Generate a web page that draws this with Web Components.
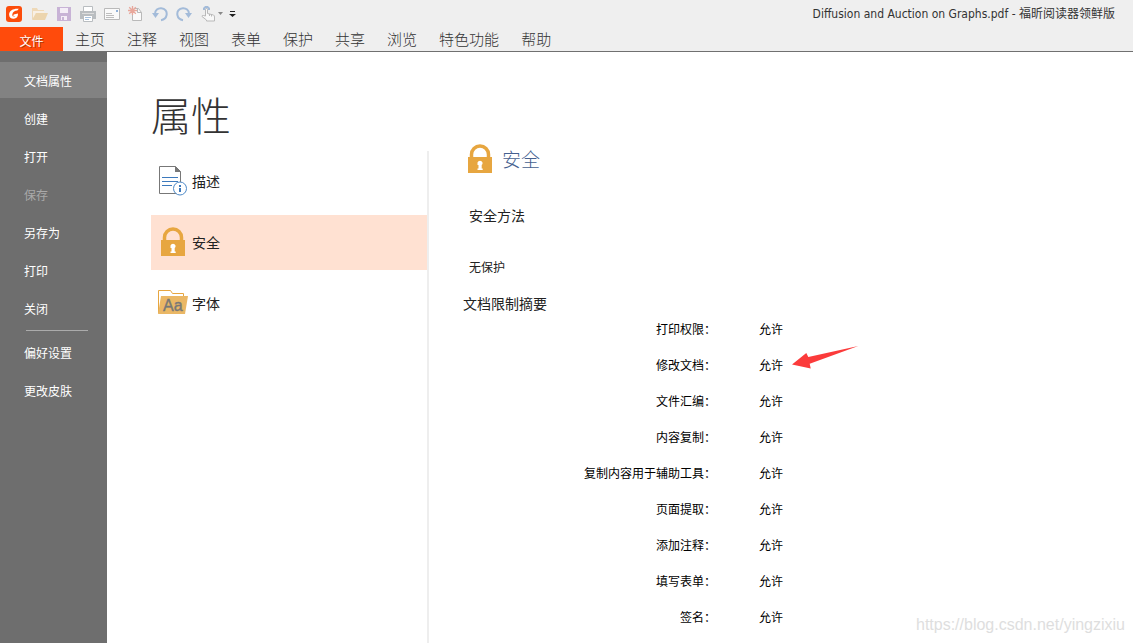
<!DOCTYPE html>
<html lang="zh-CN">
<head>
<meta charset="utf-8">
<title>Diffusion and Auction on Graphs.pdf - 福昕阅读器领鲜版</title>
<style>
html, body { margin: 0; }
body { background: #fff; color: #222; font: 12px/18px "Liberation Sans", "Noto Sans CJK SC", sans-serif; }
</style>
</head>
<body>
<reader-app></reader-app>
<script>
const define = (name, html, setup) => customElements.define(name, class extends HTMLElement {
  connectedCallback() {
    if (this.shadowRoot) return;
    const root = this.attachShadow({ mode: 'open' });
    root.innerHTML = html;
    if (setup) setup.call(this, root);
  }
});

const icons = {
  logo: [16, 16, '<rect width="16" height="16" rx="3" fill="#fc4c0a"/><path d="M12.8 2.8C8 2.2 3.2 4.4 3.1 8.4c0 3.4 2.9 5 5.600 4.200 2.200-.6 3.500-2.500 3.300-5.200L7.700 8.600l-.5 1.600 2-.3c-.5 1-3.100 1.100-2.900-1.500.2-2.600 3-3.900 5-3.800z" fill="#fff"/>'],
  open: [16, 16, '<path d="M0 2h5l1 2h6v3H4L1 13H0z" fill="#eed9b8"/><path d="M3.500 5h9v2H4L1 13V5z" fill="#f8f0e4"/><path d="M4 7h12l-3 7H0z" fill="#ecd5ae"/>'],
  save: [16, 16, '<path d="M1 1h14v14H1z" fill="#c8b3d6"/><path d="M4 2h8v5H4zM5 10h6v4H5z" fill="#f4eef7"/><path d="M6 11h2v3H6z" fill="#c8b3d6"/>'],
  print: [16, 16, '<path d="M3.500 6V.5h9V6" fill="#fff" stroke="#b9bdc0"/><path d="M0 5h16v8h-3v-2H3v2H0z" fill="#b9bdc0"/><path d="M2 7h12v1H2z" fill="#ddd"/><path d="M3.500 9.500h9v6h-9z" fill="#fff" stroke="#b9bdc0"/><path d="M5 11.500h6M5 13.500h4" stroke="#a8c3df"/>'],
  mail: [16, 16, '<path d="M.5 2.500h15v11H.5z" fill="#fafafa" stroke="#b9b9b9"/><path d="M2 7.500h6M2 9.500h8M2 11.500h8" stroke="#bdbdbd"/><path d="M12 4h2v2h-2z" fill="#8fb0d8"/>'],
  create: [16, 16, '<path d="M7 2.500h3.500l3 4v8h-9V9" fill="#fafafa" stroke="#b9b9b9"/><path d="M9.500 2.500v4h4" fill="none" stroke="#b9b9b9"/><path d="M4.500 0v9M0 4.500h9M1.200 1.200l6.600 6.600M7.800 1.200L1.200 7.800" stroke="#e8a79b" stroke-width="1.300"/>'],
  undo: [16, 16, '<path d="M3 8C3 4 6 2 9.200 2.200c4 .3 6 3.400 5.400 6.800-.5 2.800-2.600 4.700-5.600 5.200" fill="none" stroke="#a3bbd9" stroke-width="2"/><path d="M0 7h7l-3.500 5z" fill="#a3bbd9"/>'],
  redo: [16, 16, '<path d="M13 8c0-4-3-6-6.200-5.800-4 .3-6 3.400-5.400 6.800.5 2.800 2.600 4.700 5.600 5.200" fill="none" stroke="#a3bbd9" stroke-width="2"/><path d="M16 7H9l3.500 5z" fill="#a3bbd9"/>'],
  hand: [16, 16, '<path d="M5.500 10V3.500a1 1 0 0 1 2 0v4l6 1.500q1 .5 1 2v4h-8v-1L2 10.500q0-1.500 1.500-1zM9.500 8v2M11.500 8.500v2" fill="#f8f8f8" stroke="#b9b9b9"/><path d="M4 4V2.500L5.500 1h2L9 2.500V4" fill="none" stroke="#a3bbd9" stroke-width="2"/>'],
  drop: [5, 3, '<path d="M0 0h5L2.500 3z" fill="#888"/>'],
  more: [7, 6, '<path d="M1 0h5v1H1zM0 3h7L3.500 6z" fill="#222"/>'],
  lock: [24, 29, '<path d="M3.500 14v-3.500a8.500 8.500 0 0 1 17 0V14" fill="none" stroke="#e7a640" stroke-width="3.500"/><path d="M0 13h24v16H0z" fill="#e7a640"/><path d="M9.500 18.500a2.700 2.700 0 0 1 5 0v1.500l-.8 1v3.500h1V26H9.500v-1.500h1V21h-1z" fill="#fff"/>'],
  describe: [30, 31, '<path d="M1.500 1.500h16l5 5V28.500h-21z" fill="#fff" stroke="#777"/><path d="M17 1l6 6h-6z" fill="#777"/><path d="M4 12.500h16M4 16.500h16M4 20.500h10" stroke="#3c79bc"/><circle cx="22" cy="23.500" r="6.500" fill="#fff" stroke="#4d89c8"/><path d="M21 20h2v2h-2zM21 23h2v4h-2z" fill="#3c79bc"/>'],
  typeface: [30, 25, '<path d="M.5 23V.5h12l2 3h11V9" fill="#fff" stroke="#e7a640"/><path d="M3 6h27l-3 18H0z" fill="#eab765"/><text x="5" y="21" font-family="Liberation Sans, sans-serif" font-size="16" fill="#777" stroke="#777" stroke-width=".4">Aa</text>'],
  arrow: [67, 24, '<path d="M0 19.500L14.300 8l2 4L66.300 1 17.700 18.700l1 4.800z" fill="#fb3b3b"/>']
};
define('ui-icon', '', function (root) {
  const [w, h, body] = icons[this.getAttribute('name')];
  root.innerHTML = `<style>:host{display:inline-flex;flex:none}svg{display:block}</style><svg width="${w}" height="${h}" viewBox="0 0 ${w} ${h}" aria-hidden="true">${body}</svg>`;
});

define('tool-button', `<style>
:host{display:flex}
button{display:flex;align-items:center;padding:0;border:0;background:none}
</style><button type="button"></button>`, function (root) {
  const button = root.querySelector('button');
  button.setAttribute('aria-label', this.getAttribute('label'));
  button.innerHTML = `<ui-icon name="${this.getAttribute('icon')}"></ui-icon>`;
});

define('title-bar', `<style>
:host{display:flex;align-items:center;justify-content:space-between;height:27px;padding:0 18px 0 6px}
.tools{display:flex;align-items:center;gap:8px}
.logo{margin-right:2px}
.menus{display:flex;align-items:center;gap:6px;margin-left:-6px}
.name{font:12px/18px "DejaVu Sans Condensed","Noto Sans CJK SC",sans-serif;color:#333;white-space:nowrap}
</style>
<div class="tools">
<ui-icon class="logo" name="logo"></ui-icon>
<tool-button icon="open" label="打开"></tool-button>
<tool-button icon="save" label="保存"></tool-button>
<tool-button icon="print" label="打印"></tool-button>
<tool-button icon="mail" label="邮件"></tool-button>
<tool-button icon="create" label="创建"></tool-button>
<tool-button icon="undo" label="撤销"></tool-button>
<tool-button icon="redo" label="重做"></tool-button>
<tool-button icon="hand" label="手型"></tool-button>
<div class="menus"><tool-button icon="drop" label="手型选项"></tool-button>
<tool-button icon="more" label="自定义"></tool-button></div>
</div>
<div class="name"><slot></slot></div>`);

define('ribbon-tab', `<style>
:host{display:flex}
button{padding:0 11px;border:0;background:none;color:#333;font:300 15px/24px "Noto Sans CJK SC",sans-serif;white-space:nowrap}
:host([file]) button{width:63px;background:#ff4b0c;color:#fff;font-weight:400;font-size:12px;line-height:28px;height:24px;text-shadow:1px 1px #0005}
</style><button type="button"><slot></slot></button>`);

define('ribbon-bar', `<style>
:host{display:flex;height:24px;border-bottom:1px solid #707070}
::slotted([file]){margin-right:1px}
</style><slot></slot>`);

define('side-item', `<style>
:host{display:block}
button{display:block;width:100%;height:36px;padding:2px 0 0 24px;border:0;background:none;color:#fff;text-align:left;font:12px/18px "Noto Sans CJK SC",sans-serif}
:host([active]) button{background:#828282}
button:disabled{color:#a9a9a9}
</style><button type="button"><slot></slot></button>`, function (root) {
  root.querySelector('button').disabled = this.hasAttribute('off');
});

define('side-menu', `<style>
:host{display:block;background:#6e6e6e}
nav{display:flex;flex-direction:column;gap:2px;padding-top:10px}
::slotted(hr){width:62px;height:1px;margin:2px 0 1px 26px;border:0;background:#ababab}
</style><nav aria-label="文件"><slot></slot></nav>`);

define('section-item', `<style>
:host{display:block}
button{display:grid;grid-template-columns:30px 1fr;align-items:center;gap:4px;width:100%;height:55px;padding:0 7px 2px;border:0;background:none;color:#222;text-align:left;font:14px/20px "Noto Sans CJK SC",sans-serif}
:host([active]) button{background:#ffe1d2}
ui-icon{justify-self:center}
</style><button type="button"></button>`, function (root) {
  root.querySelector('button').innerHTML = `<ui-icon name="${this.getAttribute('icon')}"></ui-icon><slot></slot>`;
});

define('permission-table', `<style>
:host{display:block}
table{border-collapse:collapse;color:#000;font:12px/18px "Noto Sans CJK SC",sans-serif}
tr{height:36px}
th,td{padding:0;font-weight:400;white-space:nowrap}
th{width:253px;text-align:right}
td{padding-left:43px}
.value{position:relative}
.value ui-icon{position:absolute;left:33px;top:-11px}
</style><table aria-label="文档限制摘要"><tbody></tbody></table>`, function (root) {
  const names = ['打印权限', '修改文档', '文件汇编', '内容复制', '复制内容用于辅助工具', '页面提取', '添加注释', '填写表单', '签名'];
  root.querySelector('tbody').innerHTML = names.map(n =>
    `<tr><th scope="row">${n}：</th><td><span class="value">允许${n === '修改文档' ? '<ui-icon name="arrow"></ui-icon>' : ''}</span></td></tr>`).join('');
});

define('security-panel', `<style>
:host{display:block;padding-left:34px;font-family:"Noto Sans CJK SC",sans-serif}
header{display:flex;align-items:center;gap:10px;height:29px;margin:-7px 0 0 5px}
h2{margin:0;color:#45608f;font-size:19px;line-height:28px;font-weight:300}
h3{margin:0;font-size:14px;line-height:20px;font-weight:400}
.method{margin:32px 0 0 6px}
p{margin:33px 0 17px 6px;font-size:12px;line-height:18px}
.summary{margin-bottom:-2px}
</style>
<header><ui-icon name="lock"></ui-icon><h2>安全</h2></header>
<h3 class="method">安全方法</h3>
<p>无保护</p>
<h3 class="summary">文档限制摘要</h3>
<permission-table></permission-table>`);

define('properties-page', `<style>
:host{display:flex;flex-direction:column;padding:32px 0 0 44px}
h1{margin:0;color:#333;font:300 40px/60px "Noto Sans CJK SC",sans-serif}
.columns{display:grid;grid-template-columns:276px 1fr;flex:1;margin-top:7px}
.sections{display:flex;flex-direction:column;gap:6px;padding-top:3px}
security-panel{border-left:2px solid #eee}
</style>
<h1>属性</h1>
<div class="columns">
<div class="sections">
<section-item icon="describe">描述</section-item>
<section-item icon="lock" active>安全</section-item>
<section-item icon="typeface">字体</section-item>
</div>
<security-panel></security-panel>
</div>`);

define('reader-app', `<style>
:host{display:grid;grid-template-rows:auto 1fr;min-height:100vh;position:relative}
.top{background:#efefef}
.body{display:grid;grid-template-columns:107px 1fr}
.mark{position:absolute;right:8px;bottom:8px;color:#dedede;font:16px/20px "Liberation Sans",sans-serif}
</style>
<div class="top">
<title-bar>Diffusion and Auction on Graphs.pdf - 福昕阅读器领鲜版</title-bar>
<ribbon-bar>
<ribbon-tab file>文件</ribbon-tab><ribbon-tab>主页</ribbon-tab><ribbon-tab>注释</ribbon-tab><ribbon-tab>视图</ribbon-tab><ribbon-tab>表单</ribbon-tab><ribbon-tab>保护</ribbon-tab><ribbon-tab>共享</ribbon-tab><ribbon-tab>浏览</ribbon-tab><ribbon-tab>特色功能</ribbon-tab><ribbon-tab>帮助</ribbon-tab>
</ribbon-bar>
</div>
<div class="body">
<side-menu>
<side-item active>文档属性</side-item>
<side-item>创建</side-item>
<side-item>打开</side-item>
<side-item off>保存</side-item>
<side-item>另存为</side-item>
<side-item>打印</side-item>
<side-item>关闭</side-item>
<hr>
<side-item>偏好设置</side-item>
<side-item>更改皮肤</side-item>
</side-menu>
<properties-page></properties-page>
</div>
<div class="mark">https://blog.csdn.net/yingzixiu</div>`);
</script>
</body>
</html>
